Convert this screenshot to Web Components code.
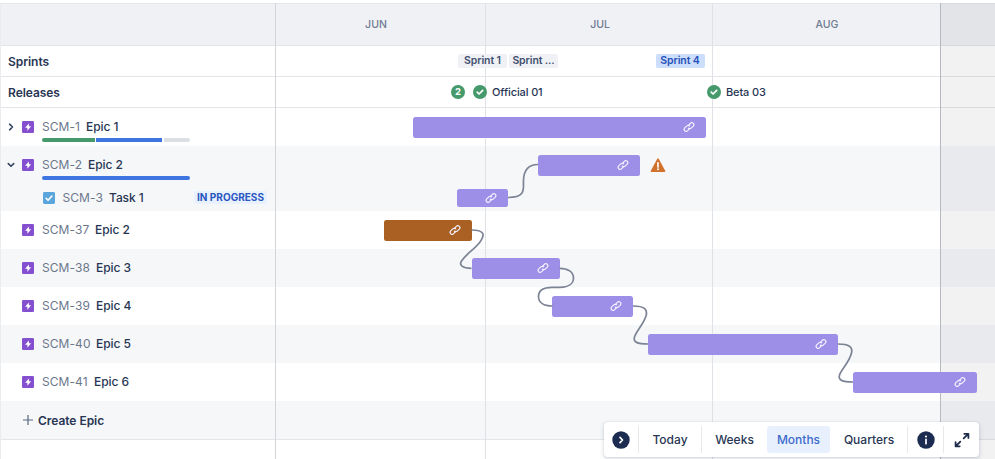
<!DOCTYPE html>
<html lang="en">
<head>
<meta charset="utf-8">
<title>Roadmap</title>
<style>
html,body{margin:0;height:100%;overflow:hidden;background:#fff}
body{font-family:Inter,"Liberation Sans",sans-serif;color:#283654}
</style>
</head>
<body>
<road-map></road-map>
<script>
const define = (name, html, setup) => {
  const t = document.createElement('template');
  t.innerHTML = html;
  customElements.define(name, class extends HTMLElement {
    connectedCallback() {
      if (this.shadowRoot) return;
      this.attachShadow({mode: 'open'}).append(t.content.cloneNode(true));
      if (setup) setup(this, this.shadowRoot);
    }
  });
};

const icons = {
  epic: [12, '<rect width="12" height="12" rx="1.3" fill="#8550cf"/><path d="M6.9 2.4v2.9h2.2L5.4 9.7V6.8H3.1z" fill="#fff"/>'],
  task: [12, '<rect width="12" height="12" rx="1.4" fill="#5aa5dc"/><path d="M3.1 6.3l2 2 3.8-4.3" fill="none" stroke="#fff" stroke-width="1.6" stroke-linecap="round" stroke-linejoin="round"/>'],
  right: [10, '<path d="M3.6 2.2L6.5 5 3.6 7.8" fill="none" stroke="#344563" stroke-width="1.6" stroke-linecap="round" stroke-linejoin="round"/>'],
  down: [10, '<path d="M2.3 3.6L5 6.3l2.7-2.7" fill="none" stroke="#344563" stroke-width="1.6" stroke-linecap="round" stroke-linejoin="round"/>'],
  none: [10, ''],
  plus: [12, '<path d="M6 1v10M1 6h10" stroke="#596780" stroke-width="1.2"/>'],
  check: [14, '<circle cx="7" cy="7" r="7" fill="#45996b"/><path d="M4.2 7.2l1.9 1.8 3.6-3.7" fill="none" stroke="#fff" stroke-width="1.7" stroke-linecap="round" stroke-linejoin="round"/>'],
  link: [12, '<g fill="none" stroke="#f6f2ff" stroke-width="1.15" stroke-linecap="round"><path d="M5.2 4.7L7.3 2.3a2.05 2.05 0 0 1 3 2.8L8.2 7.2a2.05 2.05 0 0 1-2.95-.1"/><path d="M6.8 7.3L4.7 9.7a2.05 2.05 0 0 1-3-2.8L3.8 4.8a2.05 2.05 0 0 1 2.95.1"/></g>'],
  warn: [16, '<path d="M7.3 1.8q.7-1.2 1.4 0l6.5 12q.5 1.1-.7 1.1H1.5q-1.2 0-.7-1.1z" fill="#d0722c"/><path d="M8 5.8v4.2" stroke="#fff" stroke-width="1.7" stroke-linecap="round"/><circle cx="8" cy="12.3" r="1" fill="#fff"/>'],
  go: [18, '<circle cx="9" cy="9" r="8.7" fill="#1c2b50"/><path d="M8 6.4L10.5 9 8 11.6" fill="none" stroke="#fff" stroke-width="1.7" stroke-linecap="round" stroke-linejoin="round"/>'],
  info: [18, '<circle cx="9" cy="9" r="8.7" fill="#1c2b50"/><circle cx="9" cy="5.5" r="1.1" fill="#fff"/><path d="M9 8.4v4.3" stroke="#fff" stroke-width="1.7" stroke-linecap="round"/>'],
  expand: [16, '<path d="M9.7 6.3l4.3-4.2M10.3 1.8h4.1v4.1M6.3 9.7L2 14M1.6 10.2v4.1h4.1" fill="none" stroke="#1f2d4d" stroke-width="1.8" stroke-linecap="round" stroke-linejoin="round"/>']
};
define('rm-icon', '<style>:host{display:block;flex:none}svg{display:block;overflow:visible}</style><span></span>', (h, r) => {
  const [n, body] = icons[h.getAttribute('name')];
  r.querySelector('span').innerHTML = `<svg width="${n}" height="${n}" viewBox="0 0 ${n} ${n}">${body}</svg>`;
});

define('rm-bar', `<style>
:host{display:flex;align-items:center;justify-content:flex-end;box-sizing:border-box;flex:none;height:21px;border-radius:2.5px;background:#9d8fe7;padding-right:11px}
:host([rust]){background:#a96022}
:host([small]){height:18px}
</style><rm-icon name="link"></rm-icon>`);

define('rm-row', `<style>
:host{display:flex;height:var(--h,38px);box-sizing:border-box}
:host([alt]){background:#f6f7f9}
:host([line]){border-bottom:1px solid #e3e5e9}
:host([head]){background:#f0f1f4}
.side{width:275px;flex:none;display:flex;align-items:center;box-sizing:border-box;padding-left:8px}
.time{flex:1;min-width:0;display:flex;align-items:center;position:relative;z-index:1}
</style><div class="side"><slot name="side"></slot></div><div class="time"><slot></slot></div>`);

define('rm-issue', `<style>
:host{display:flex;align-items:center;flex:1;font-size:12px;line-height:16px;height:16px;margin-left:-2px}
:host([sub]){padding-left:20.5px}
.icon{margin-left:6px;margin-right:8px}
.key{color:#6c778c;letter-spacing:.06px;width:var(--kw)}
.name{font-weight:500;color:#283654;letter-spacing:-.08px}
.text{display:grid;grid-template-rows:16px 0}
.line{display:flex;white-space:pre}
.tag{margin-left:auto;margin-right:8px;background:#e9f1fe;color:#2a57c0;font-size:10px;font-weight:700;letter-spacing:.02px;border-radius:2px;line-height:13px;padding:0 3px;white-space:nowrap}
</style><div class="parts" style="display:contents"></div>`, (h, r) => {
  const a = n => h.getAttribute(n);
  r.querySelector('.parts').innerHTML =
    `<rm-icon name="${a('toggle') || 'none'}"></rm-icon>
    <rm-icon class="icon" name="${h.hasAttribute('sub') ? 'task' : 'epic'}"></rm-icon>
    <div class="text"><div class="line"><span class="key">${a('key')}</span><span class="name">${a('name')}</span></div><slot></slot></div>
    ${a('status') ? `<span class="tag">${a('status')}</span>` : ''}`;
});

define('rm-progress', `<style>:host{display:flex;gap:1.5px;width:148px;height:3.5px;margin-top:3px;border-radius:2px;overflow:hidden}</style><slot></slot>`);

define('rm-lozenge', `<style>
:host{display:block;box-sizing:border-box;flex:none;width:49px;height:14px;line-height:14px;border-radius:2px;background:#f0f1f5;color:#42506f;font-size:10.5px;font-weight:600;letter-spacing:-.1px;text-align:center;white-space:nowrap}
:host([active]){background:#cdddfc;color:#2553b8}
</style><slot></slot>`);

define('rm-release', `<style>
:host{display:flex;align-items:center;flex:none;gap:5px;font-size:11px;font-weight:500;letter-spacing:-.12px;white-space:nowrap}
.count{width:14px;height:14px;border-radius:50%;background:#45996b;color:#fff;font-size:9.5px;font-weight:700;line-height:14px;text-align:center}
</style>`, (h, r) => {
  if (h.hasAttribute('count')) r.innerHTML += `<span class="count">${h.getAttribute('count')}</span>`;
  else r.innerHTML += '<rm-icon name="check"></rm-icon><slot></slot>';
});

define('rm-links', `<style>:host{position:absolute;inset:0;z-index:2;pointer-events:none}svg{display:block}</style>
<svg width="995" height="459" fill="none" stroke="#7b8395" stroke-width="1.7">
<path d="M508 197.5C527 197.5 523 188 523.500 180C524 169 529 164.500 538 164.500"/>
<path d="M471.500 230C485 230 485 235 480 242C475 249 467 253 461.500 261C459 265 462 268.300 471.500 268.300"/>
<path d="M559.500 268.300C568 268.300 573.500 272 573.500 278C573.500 284 568 287.300 560 287.300H552C543 287.300 538.500 291 538.500 296.500C538.500 302.500 544 306 552.500 306"/>
<path d="M633 306C644 306 648 309 646 316C643 325 637 330 634.500 337C633 342 637 344 648 344"/>
<path d="M838 344C849 344 853 347 851.500 353C849 363 842 368 839.500 375C838 380 842 382 853 382"/>
</svg>`);

define('rm-toolbar', `<style>
:host{position:absolute;left:604px;top:422px;z-index:3;display:flex;width:375px;height:35px;background:#fff;border-radius:3px;box-shadow:0 0 1px rgba(9,30,66,.3),0 2px 5px rgba(9,30,66,.16);padding:4px 0;box-sizing:border-box;font-size:12px;font-weight:500;line-height:27px}
.c{display:flex;align-items:center;justify-content:center;box-sizing:border-box}
.s{border-right:1px solid #e6e8ec}
.on{background:#e9f0fd;color:#3c6bcd;border-radius:3px}
</style>
<div class="c s" style="width:35px"><rm-icon name="go"></rm-icon></div>
<div class="c s" style="width:63px">Today</div>
<div class="c" style="width:65px">Weeks</div>
<div class="c on" style="width:63px">Months</div>
<div class="c s" style="width:78px;padding-left:1px">Quarters</div>
<div class="c s" style="width:36px;padding-left:1px"><rm-icon name="info"></rm-icon></div>
<div class="c" style="width:35px"><rm-icon name="expand"></rm-icon></div>`);

define('road-map', `<style>
:host{display:block;position:relative;width:995px;height:459px;overflow:hidden;box-sizing:border-box;padding-top:3px}
.lines{position:absolute;inset:3px 0 0 0;display:grid;grid-template-columns:1px 274px 210px 227px 228px 1fr;pointer-events:none}
.lines i{border-left:1px solid #dfe1e6}
.lines i:first-child{background:#ebecf0;border:0}
.lines i:nth-child(2){border:0}
.lines i:nth-child(3){border-color:#d3d5db}
.lines i:last-child{background:rgba(22,24,36,.055);border-color:#b6b9c0}
.title{font-size:12px;font-weight:600;letter-spacing:-.05px}
.months{display:grid;grid-template-columns:202px 246px 208px;text-align:center;font-size:10.5px;color:#6f7b92;font-weight:500}
.create{display:flex;align-items:center;gap:4px;padding-left:14px;font-size:12px;font-weight:600;letter-spacing:-.04px}
b{display:block;height:4px}
</style>
<rm-row head line style="--h:43px;border-top:1px solid #e6e7eb"><div class="months"><span>JUN</span><span>JUL</span><span>AUG</span></div></rm-row>
<rm-row line style="--h:31px"><span slot="side" class="title">Sprints</span>
<rm-lozenge style="margin-left:183px">Sprint 1</rm-lozenge><rm-lozenge style="margin-left:2px">Sprint ...</rm-lozenge><rm-lozenge active style="margin-left:97.5px">Sprint 4</rm-lozenge></rm-row>
<rm-row line style="--h:31px"><span slot="side" class="title">Releases</span>
<rm-release count="2" style="margin-left:176px"></rm-release><rm-release style="margin-left:8px;width:70px">Official 01</rm-release><rm-release style="margin-left:164px">Beta 03</rm-release></rm-row>
<rm-row><rm-issue slot="side" toggle="right" key="SCM-1" name="Epic 1" style="--kw:44px"><rm-progress><b style="width:52.5px;background:#45996b"></b><b style="width:66px;background:#3f75e0"></b><b style="flex:1;background:#dcdfe4"></b></rm-progress></rm-issue><rm-bar style="margin-left:138px;width:293px"></rm-bar></rm-row>
<rm-row alt><rm-issue slot="side" toggle="down" key="SCM-2" name="Epic 2" style="--kw:46px"><rm-progress><b style="flex:1;background:#3f75e0"></b></rm-progress></rm-issue><rm-bar style="margin-left:262.5px;width:102.5px"></rm-bar><rm-icon name="warn" style="margin-left:9.5px"></rm-icon></rm-row>
<rm-row alt style="--h:27px"><rm-issue slot="side" sub key="SCM-3" name="Task 1" status="IN PROGRESS" style="--kw:46.5px"></rm-issue><rm-bar small style="margin-left:182px;width:51px"></rm-bar></rm-row>
<rm-row><rm-issue slot="side" key="SCM-37" name="Epic 2" style="--kw:53px"></rm-issue><rm-bar rust style="margin-left:108.5px;width:88px"></rm-bar></rm-row>
<rm-row alt><rm-issue slot="side" key="SCM-38" name="Epic 3" style="--kw:54px"></rm-issue><rm-bar style="margin-left:196.5px;width:88px"></rm-bar></rm-row>
<rm-row><rm-issue slot="side" key="SCM-39" name="Epic 4" style="--kw:54px"></rm-issue><rm-bar style="margin-left:277px;width:81px"></rm-bar></rm-row>
<rm-row alt><rm-issue slot="side" key="SCM-40" name="Epic 5" style="--kw:54px"></rm-issue><rm-bar style="margin-left:372.5px;width:190.5px"></rm-bar></rm-row>
<rm-row><rm-issue slot="side" key="SCM-41" name="Epic 6" style="--kw:52px"></rm-issue><rm-bar style="margin-left:577.5px;width:124.5px"></rm-bar></rm-row>
<rm-row alt line style="--h:39px"><span slot="side" class="create"><rm-icon name="plus"></rm-icon>Create Epic</span></rm-row>
<div class="lines"><i></i><i></i><i></i><i></i><i></i><i></i></div>
<rm-links></rm-links>
<rm-toolbar></rm-toolbar>`);
</script>
</body>
</html>
